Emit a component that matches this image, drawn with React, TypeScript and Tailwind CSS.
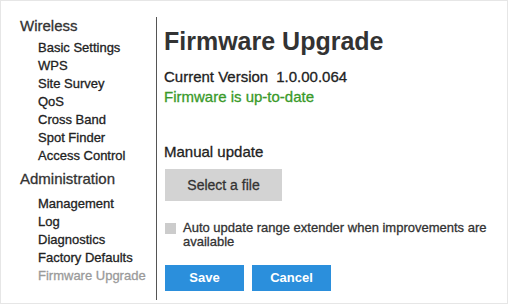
const wireless = ["Basic Settings", "WPS", "Site Survey", "QoS", "Cross Band", "Spot Finder", "Access Control"]
const admin = ["Management", "Log", "Diagnostics", "Factory Defaults", "Firmware Upgrade"]

const NavGroup = ({ title, items, active, className }: { title: string; items: string[]; active?: string; className?: string }) => (
  <div className={className}>
    <div className="text-[15px] leading-[18px] text-[#333]">{title}</div>
    <ul className={title === "Wireless" ? "mt-[4px]" : "mt-[7px]"}>
      {items.map((item) => (
        <li
          key={item}
          className={`pl-[18px] text-[13px] leading-[18px] whitespace-nowrap ${item === active ? "text-[#9a9a9a]" : "text-[#222]"}`}
        >
          {item}
        </li>
      ))}
    </ul>
  </div>
)

export default function App() {
  return (
    <div
      className="w-[508px] h-[304px] bg-white border border-[#e6e6e6] flex overflow-hidden [-webkit-text-stroke:0.3px]"
      style={{ fontFamily: '"Liberation Sans", Arial, sans-serif' }}
    >
      <aside className="w-[156px] shrink-0 mt-[16px] mb-[3px] border-r border-[#555] pl-[19px]">
        <NavGroup title="Wireless" items={wireless} />
        <NavGroup title="Administration" items={admin} active="Firmware Upgrade" className="mt-[5px]" />
      </aside>

      <main className="flex-1 pl-[7px] pr-[9px] pt-[26px] text-[#222]">
        <h1 className="text-[25px] leading-[28px] font-bold text-[#333] [-webkit-text-stroke:0px]">Firmware Upgrade</h1>
        <div className="mt-[12px] text-[15px] leading-[20px]">
          <p>
            Current Version<span className="ml-[8px]">1.0.00.064</span>
          </p>
          <p className="text-[#3a9a2a]">Firmware is up-to-date</p>
        </div>

        <p className="mt-[35px] text-[15px] leading-[20px]">Manual update</p>
        <button className="mt-[7px] ml-[1px] w-[117px] h-[32px] bg-[#d3d3d3] text-[14px] text-[#333]">
          Select a file
        </button>

        <label className="mt-[20px] ml-[1px] flex items-start gap-[7px] text-[13px] leading-[14px] text-[#333]">
          <span className="mt-[2px] w-[11px] h-[11px] shrink-0 bg-[#cccccc]" />
          <span>Auto update range extender when improvements are available</span>
        </label>

        <div className="mt-[16px] ml-[1px] flex gap-[8px]">
          <button className="w-[79px] h-[26px] bg-[#2b8fdc] text-white text-[13px] font-bold [-webkit-text-stroke:0px]">Save</button>
          <button className="w-[79px] h-[26px] bg-[#2b8fdc] text-white text-[13px] font-bold [-webkit-text-stroke:0px]">Cancel</button>
        </div>
      </main>
    </div>
  )
}
